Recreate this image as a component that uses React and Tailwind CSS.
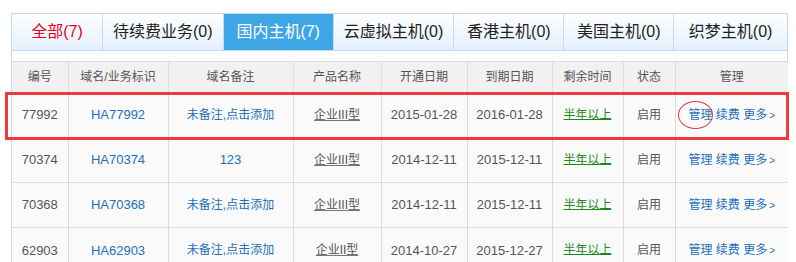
import React from "react"

const tabs = [
  { label: "全部(7)", w: "w-[91px]", red: true },
  { label: "待续费业务(0)", w: "w-[121px]" },
  { label: "国内主机(7)", w: "w-[110px]", active: true },
  { label: "云虚拟主机(0)", w: "w-[121px]" },
  { label: "香港主机(0)", w: "w-[110px]" },
  { label: "美国主机(0)", w: "w-[110px]" },
  { label: "织梦主机(0)", w: "w-[113px]", last: true },
]

const rows = [
  { id: "77992", note: "未备注,点击添加", product: "企业III型", start: "2015-01-28", end: "2016-01-28" },
  { id: "70374", note: "123", product: "企业III型", start: "2014-12-11", end: "2015-12-11" },
  { id: "70368", note: "未备注,点击添加", product: "企业III型", start: "2014-12-11", end: "2015-12-11" },
  { id: "62903", note: "未备注,点击添加", product: "企业II型", start: "2014-10-27", end: "2015-12-27" },
]

const headers = ["编号", "域名/业务标识", "域名备注", "产品名称", "开通日期", "到期日期", "剩余时间", "状态", "管理"]
const widths = [56, 100, 125, 88, 86, 85, 71, 52, 113]

export default function App() {
  return (
    <div
      className="relative w-[796px] h-[262px] overflow-hidden bg-white"
      style={{ fontFamily: '"Liberation Sans", "Noto Sans CJK SC", sans-serif' }}
    >
      <div className="ml-[11px] mt-[13px] w-[777px] border-x border-t border-[#c6dbf1]">
        {/* tabs */}
        <div className="flex h-[37px] border-b border-[#c6dbf1]">
          {tabs.map((t) => (
            <div
              key={t.label}
              className={`${t.w} flex items-center justify-center text-[16px] ${t.last ? "" : "border-r border-[#c6dbf1]"} ${
                t.active
                  ? "bg-[#3ea6e5] text-white"
                  : "bg-gradient-to-b from-white to-[#e3effc] " + (t.red ? "text-[#e8001c]" : "text-[#222]")
              }`}
            >
              {t.label}
            </div>
          ))}
        </div>

        <div className="h-[10px]" />

        <table className="table-fixed border-collapse w-[776px] text-[12px] text-[#555]">
          <colgroup>
            {widths.map((w, i) => (
              <col key={i} style={{ width: w }} />
            ))}
          </colgroup>
          <thead>
            <tr className="h-[31px] bg-[#f1f1f1]">
              {headers.map((h, i) => (
                <th
                  key={h}
                  className={`font-normal text-center border-t border-[#dcdcdc] ${i < 8 ? "border-r" : ""} text-[#555]`}
                >
                  {h}
                </th>
              ))}
            </tr>
          </thead>
          <tbody>
            {rows.map((r, idx) => (
              <tr key={r.id} className="h-[45px] bg-[#fafafa] border-t border-[#dcdcdc]">
                <td className="text-center border-r border-[#dcdcdc] text-[13px]">{r.id}</td>
                <td className="text-center border-r border-[#dcdcdc] text-[13px] text-[#2470b8]">HA{r.id}</td>
                <td className={`text-center border-r border-[#dcdcdc] text-[#2470b8] ${r.note === "123" ? "text-[13px]" : ""}`}>
                  {r.note}
                </td>
                <td className="text-center border-r border-[#dcdcdc]">
                  <span className="underline underline-offset-1 decoration-[#777] text-[#555]">{r.product}</span>
                </td>
                <td className="text-center border-r border-[#dcdcdc] text-[13px]">{r.start}</td>
                <td className="text-center border-r border-[#dcdcdc] text-[13px]">{r.end}</td>
                <td className="text-center border-r border-[#dcdcdc]">
                  <span className="text-[#1a8a1a] underline underline-offset-0">半年以上</span>
                </td>
                <td className="text-center border-r border-[#dcdcdc]">启用</td>
                <td className="text-center text-[#2470b8] whitespace-nowrap">
                  <span className="relative">
                    管理
                    {idx === 0 && (
                      <span className="absolute left-[-10px] top-[-7px] w-[35px] h-[28px] rounded-[50%] border border-[#e0393e]" />
                    )}
                  </span>{" "}
                  续费 更多<span className="text-[10px] ml-[2px]">&gt;</span>
                </td>
              </tr>
            ))}
          </tbody>
        </table>
      </div>

      {/* highlight box */}
      <div className="absolute left-[5px] top-[92px] w-[784px] h-[48px] border-[3px] border-[#f23a3a]" />
    </div>
  )
}
